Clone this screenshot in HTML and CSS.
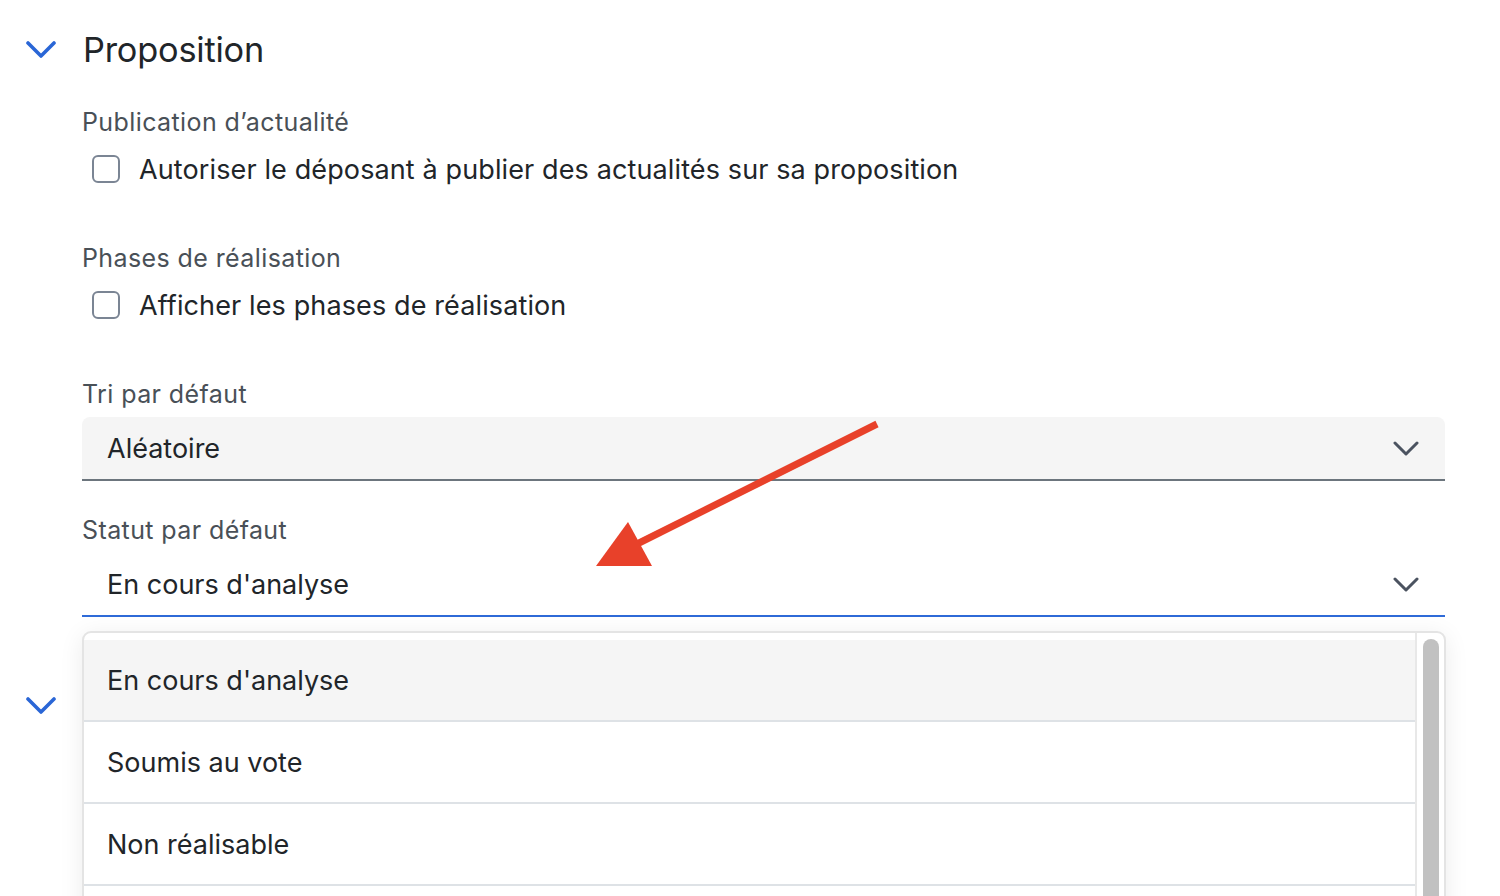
FILE: index.html
```html
<!DOCTYPE html>
<html lang="fr">
<head>
<meta charset="utf-8">
<link rel="stylesheet" href="styles.css">
</head>
<body>
<div class="page">
  <section class="section">
    <div class="section-head">
      <svg class="toggle" width="30" height="18" viewBox="0 0 30 18"><path d="M2 2 L15 15 L28 2" fill="none" stroke="#2a66d6" stroke-width="3.6" stroke-linecap="round" stroke-linejoin="round"/></svg>
      <h2 class="section-title">Proposition</h2>
    </div>
    <div class="section-body">
      <div class="field">
        <div class="label">Publication d’actualité</div>
        <label class="check"><span class="box"></span><span>Autoriser le déposant à publier des actualités sur sa proposition</span></label>
      </div>
      <div class="field">
        <div class="label">Phases de réalisation</div>
        <label class="check"><span class="box"></span><span>Afficher les phases de réalisation</span></label>
      </div>
      <div class="field select-field">
        <div class="label">Tri par défaut</div>
        <div class="select filled">
          <span>Aléatoire</span>
          <svg class="caret" width="26" height="16" viewBox="0 0 26 16"><path d="M2 2 L13 13 L24 2" fill="none" stroke="#4b5360" stroke-width="3" stroke-linecap="round" stroke-linejoin="round"/></svg>
        </div>
      </div>
      <div class="field select-field second">
        <div class="label">Statut par défaut</div>
        <div class="select focused">
          <span>En cours d'analyse</span>
          <svg class="caret" width="26" height="16" viewBox="0 0 26 16"><path d="M2 2 L13 13 L24 2" fill="none" stroke="#4b5360" stroke-width="3" stroke-linecap="round" stroke-linejoin="round"/></svg>
        </div>
        <div class="menu">
          <div class="menu-list">
            <div class="option active">En cours d'analyse</div>
            <div class="option">Soumis au vote</div>
            <div class="option">Non réalisable</div>
            <div class="option"></div>
          </div>
          <div class="scrollbar"><div class="thumb"></div></div>
        </div>
      </div>
    </div>
  </section>
  <section class="section next">
    <div class="section-head">
      <svg class="toggle" width="30" height="18" viewBox="0 0 30 18"><path d="M2 2 L15 15 L28 2" fill="none" stroke="#2a66d6" stroke-width="3.6" stroke-linecap="round" stroke-linejoin="round"/></svg>
    </div>
  </section>
</div>
<svg class="annotation" width="1500" height="896" viewBox="0 0 1500 896">
  <line x1="877" y1="424" x2="625" y2="550" stroke="#e8412a" stroke-width="7"/>
  <polygon points="596,566 628,522 652,566" fill="#e8412a"/>
</svg>
</body>
</html>
```
FILE: styles.css
```css
html, body {
  margin: 0;
  padding: 0;
  background: #ffffff;
  overflow: hidden;
}
body {
  font-family: Inter, "Liberation Sans", sans-serif;
  color: #212529;
  width: 1500px;
  height: 896px;
  position: relative;
}
.page {
  padding: 28px 55px 0 26px;
}
.section-head {
  display: flex;
  align-items: center;
  height: 44px;
}
.toggle {
  display: block;
  width: 30px;
  height: 18px;
  margin-right: 27px;
  margin-top: -1px;
}
.section-title {
  margin: 0;
  font-size: 34.3px;
  font-weight: 400;
  line-height: 44px;
  color: #212529;
  letter-spacing: -0.2px;
}
.section-body {
  padding-left: 56px;
  padding-top: 34px;
  display: flex;
  flex-direction: column;
}
.field + .field {
  margin-top: 53px;
}
.field.select-field {
  margin-top: 53px;
}
.field.select-field.second {
  margin-top: 33px;
  position: relative;
}
.label {
  font-size: 25px;
  line-height: 32px;
  letter-spacing: 0.4px;
  color: #495057;
}
.check {
  display: flex;
  align-items: center;
  height: 40px;
  margin-top: 11px;
  font-size: 27px;
  letter-spacing: 0.12px;
  padding-left: 10px;
}
.box {
  width: 24px;
  height: 24px;
  border: 2px solid #7b8594;
  border-radius: 6px;
  margin-right: 19px;
  flex: none;
}
.select {
  margin-top: 7px;
  height: 62px;
  border-bottom: 2px solid #6c757d;
  display: flex;
  align-items: center;
  justify-content: space-between;
  padding: 0 26px 0 25px;
  font-size: 27px;
  border-radius: 8px 8px 0 0;
}
.select.filled {
  background: #f5f5f5;
}
.select.focused {
  border-bottom-color: #2f6bd8;
}
.caret {
  display: block;
  margin-top: 1px;
}
.menu {
  position: absolute;
  left: 0;
  right: -1px;
  top: 117px;
  height: 300px;
  background: #ffffff;
  border: 2px solid #e4e4e4;
  border-radius: 9px 9px 0 0;
  box-shadow: 0 4px 24px rgba(0, 0, 0, 0.08);
  display: flex;
  z-index: 5;
}
.menu-list {
  flex: 1;
  padding-top: 7px;
}
.option {
  height: 80px;
  display: flex;
  align-items: center;
  padding-left: 23px;
  font-size: 27px;
  border-bottom: 2px solid #dee2e6;
}
.option.active {
  background: #f5f5f5;
}
.scrollbar {
  width: 29px;
  border-left: 2px solid #e8e8e8;
  padding: 6px 5px 0 6px;
  box-sizing: border-box;
  flex: none;
}
.thumb {
  width: 16px;
  height: 400px;
  background: #c1c1c1;
  border-radius: 8px;
}
.section.next {
  margin-top: 67px;
}
.annotation {
  position: absolute;
  left: 0;
  top: 0;
  pointer-events: none;
  z-index: 10;
}
```
